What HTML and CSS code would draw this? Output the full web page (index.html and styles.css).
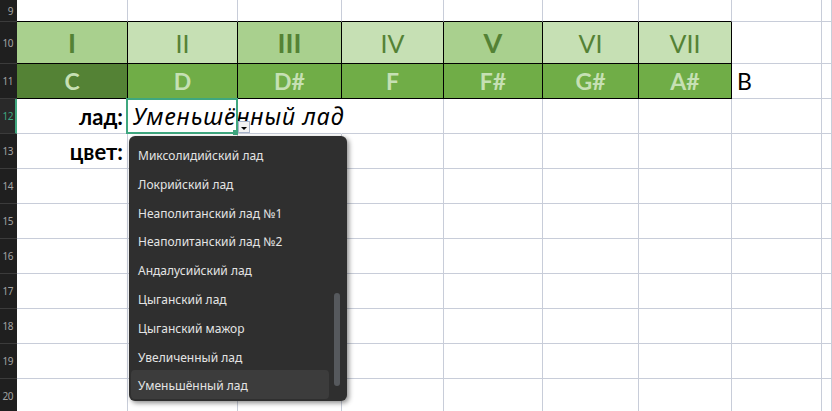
FILE: index.html
```html
<!DOCTYPE html>
<html lang="ru">
<head>
<meta charset="utf-8">
<title>Лады</title>
<link rel="stylesheet" href="styles.css">
</head>
<body>
<div class="sheet">
  <!-- row 9 -->
  <div class="rh r9"><span>9</span></div>
  <div class="c tb"></div><div class="c tb"></div><div class="c tb"></div><div class="c tb"></div><div class="c tb"></div><div class="c tb"></div><div class="c tb"></div><div class="c"></div><div class="c"></div>
  <!-- row 10 -->
  <div class="rh"><span>10</span></div>
  <div class="c t deg mid strong">I</div>
  <div class="c t deg light">II</div>
  <div class="c t deg mid strong">III</div>
  <div class="c t deg light">IV</div>
  <div class="c t deg mid strong">V</div>
  <div class="c t deg light">VI</div>
  <div class="c t deg light">VII</div>
  <div class="c"></div><div class="c"></div>
  <!-- row 11 -->
  <div class="rh"><span>11</span></div>
  <div class="c t note dark">C</div>
  <div class="c t note green">D</div>
  <div class="c t note green">D#</div>
  <div class="c t note green">F</div>
  <div class="c t note green">F#</div>
  <div class="c t note green">G#</div>
  <div class="c t note green">A#</div>
  <div class="c plain">B</div>
  <div class="c"></div>
  <!-- row 12 -->
  <div class="rh active"><span>12</span></div>
  <div class="c label">лад:</div>
  <div class="c nob value"><span>Уменьшённый лад</span></div>
  <div class="c nob"></div><div class="c"></div><div class="c"></div><div class="c"></div><div class="c"></div><div class="c"></div><div class="c"></div>
  <!-- row 13 -->
  <div class="rh"><span>13</span></div>
  <div class="c label">цвет:</div>
  <div class="c"></div><div class="c"></div><div class="c"></div><div class="c"></div><div class="c"></div><div class="c"></div><div class="c"></div><div class="c"></div>
  <!-- row 14 -->
  <div class="rh"><span>14</span></div>
  <div class="c"></div><div class="c"></div><div class="c"></div><div class="c"></div><div class="c"></div><div class="c"></div><div class="c"></div><div class="c"></div><div class="c"></div>
  <!-- row 15 -->
  <div class="rh"><span>15</span></div>
  <div class="c"></div><div class="c"></div><div class="c"></div><div class="c"></div><div class="c"></div><div class="c"></div><div class="c"></div><div class="c"></div><div class="c"></div>
  <!-- row 16 -->
  <div class="rh"><span>16</span></div>
  <div class="c"></div><div class="c"></div><div class="c"></div><div class="c"></div><div class="c"></div><div class="c"></div><div class="c"></div><div class="c"></div><div class="c"></div>
  <!-- row 17 -->
  <div class="rh"><span>17</span></div>
  <div class="c"></div><div class="c"></div><div class="c"></div><div class="c"></div><div class="c"></div><div class="c"></div><div class="c"></div><div class="c"></div><div class="c"></div>
  <!-- row 18 -->
  <div class="rh"><span>18</span></div>
  <div class="c"></div><div class="c"></div><div class="c"></div><div class="c"></div><div class="c"></div><div class="c"></div><div class="c"></div><div class="c"></div><div class="c"></div>
  <!-- row 19 -->
  <div class="rh"><span>19</span></div>
  <div class="c"></div><div class="c"></div><div class="c"></div><div class="c"></div><div class="c"></div><div class="c"></div><div class="c"></div><div class="c"></div><div class="c"></div>
  <!-- row 20 -->
  <div class="rh"><span>20</span></div>
  <div class="c"></div><div class="c"></div><div class="c"></div><div class="c"></div><div class="c"></div><div class="c"></div><div class="c"></div><div class="c"></div><div class="c"></div>

  <!-- selection overlay -->
  <div class="selection"><i class="handle"></i></div>
  <div class="dd-btn"><i class="tri"></i></div>

  <!-- dropdown list -->
  <div class="menu">
    <ul class="items">
      <li>Миксолидийский лад</li>
      <li>Локрийский лад</li>
      <li>Неаполитанский лад №1</li>
      <li>Неаполитанский лад №2</li>
      <li>Андалусийский лад</li>
      <li>Цыганский лад</li>
      <li>Цыганский мажор</li>
      <li>Увеличенный лад</li>
      <li class="hl">Уменьшённый лад</li>
    </ul>
    <div class="thumb"></div>
  </div>
</div>
</body>
</html>
```
FILE: styles.css
```css
html, body {
  margin: 0;
  padding: 0;
  background: #ffffff;
  overflow: hidden;
}

.sheet {
  position: relative;
  display: grid;
  grid-template-columns: 17px 111px 110px 104px 102px 99px 96px 93px 90px 10px;
  grid-template-rows: 22px 42px repeat(10, 35px);
  width: 832px;
  height: 411px;
  overflow: hidden;
  font-family: Lato, "Open Sans", "Noto Sans", sans-serif;
  color: #000;
}

.c {
  box-sizing: border-box;
  border-right: 1px solid #c8cdd9;
  border-bottom: 1px solid #c8cdd9;
  display: flex;
  align-items: flex-end;
  min-width: 0;
  white-space: nowrap;
}

.c.tb { border-bottom-color: #000; }
.c.t { border-right-color: #000; border-bottom-color: #000; }
.c.nob { border-right-color: transparent; }

/* row headers */
.rh {
  box-sizing: border-box;
  background: #1f1f1f;
  border-bottom: 1px solid #3b3b3b;
  color: #a3a3a3;
  font-family: "Noto Sans", sans-serif;
  font-size: 10px;
  letter-spacing: -0.5px;
  display: flex;
  align-items: center;
  justify-content: flex-end;
  padding-right: 4px;
  overflow: hidden;
  white-space: nowrap;
}
.rh.r9 { align-items: flex-end; padding-bottom: 3px; }
.rh.active {
  background: #292929;
  color: #3fa77f;
  border-right: 2px solid #3fa77f;
  padding-right: 2px;
}

/* table cells */
.deg {
  justify-content: center;
  align-items: center;
  color: #548235;
  font-size: 25px;
}
.deg.strong { font-weight: 700; font-size: 27px; }
.mid { background: #a9d08e; }
.light { background: #c6e0b4; }

.note {
  justify-content: center;
  align-items: center;
  color: #c6e0b4;
  font-weight: 700;
  font-size: 23px;
}
.dark { background: #548235; }
.green { background: #70ad47; }

.plain {
  font-size: 23px;
  align-items: center;
  padding-left: 5px;
}

.label {
  justify-content: flex-end;
  align-items: center;
  padding-right: 4px;
  font-weight: 700;
  font-size: 22px;
}

.value {
  align-items: center;
  padding-left: 5px;
  overflow: visible;
  position: relative;
  z-index: 1;
}
.value span {
  font-family: "Noto Sans", "Open Sans", sans-serif;
  font-style: italic;
  font-size: 23px;
  letter-spacing: 0.9px;
}

/* selection */
.selection {
  position: absolute;
  left: 126px;
  top: 98px;
  width: 112px;
  height: 36px;
  box-sizing: border-box;
  border: 2px solid #3fa77f;
  z-index: 2;
}
.handle {
  position: absolute;
  right: -2px;
  bottom: -3px;
  width: 5px;
  height: 5px;
  background: #3fa77f;
}

.dd-btn {
  position: absolute;
  left: 238px;
  top: 121px;
  width: 12px;
  height: 12px;
  box-sizing: border-box;
  background: #f3f3f3;
  border: 1px solid #a8b5cb;
  z-index: 3;
  display: flex;
  align-items: center;
  justify-content: center;
}
.tri {
  display: block;
  width: 0;
  height: 0;
  margin-top: 3px;
  border-left: 3px solid transparent;
  border-right: 3px solid transparent;
  border-top: 3px solid #000;
}

/* dropdown */
.menu {
  position: absolute;
  left: 129px;
  top: 136px;
  width: 218px;
  height: 265px;
  box-sizing: border-box;
  background: #2f2f2f;
  border-radius: 6px;
  box-shadow: 2px 2px 5px rgba(0, 0, 0, 0.45);
  padding: 4px 0 0 2px;
  z-index: 5;
}
.items {
  list-style: none;
  margin: 0;
  padding: 0;
  width: 198px;
}
.items li {
  box-sizing: border-box;
  height: 28.8px;
  padding-top: 4px;
  line-height: 24.8px;
  padding-left: 7px;
  font-family: "Noto Sans", "Open Sans", sans-serif;
  font-size: 12px;
  color: #e4e4e4;
  border-radius: 4px;
  white-space: nowrap;
}
.items li.hl { background: #3c3c3c; }

.thumb {
  position: absolute;
  left: 205px;
  top: 157px;
  width: 6px;
  height: 93px;
  border-radius: 3px;
  background: #56595d;
}
```
